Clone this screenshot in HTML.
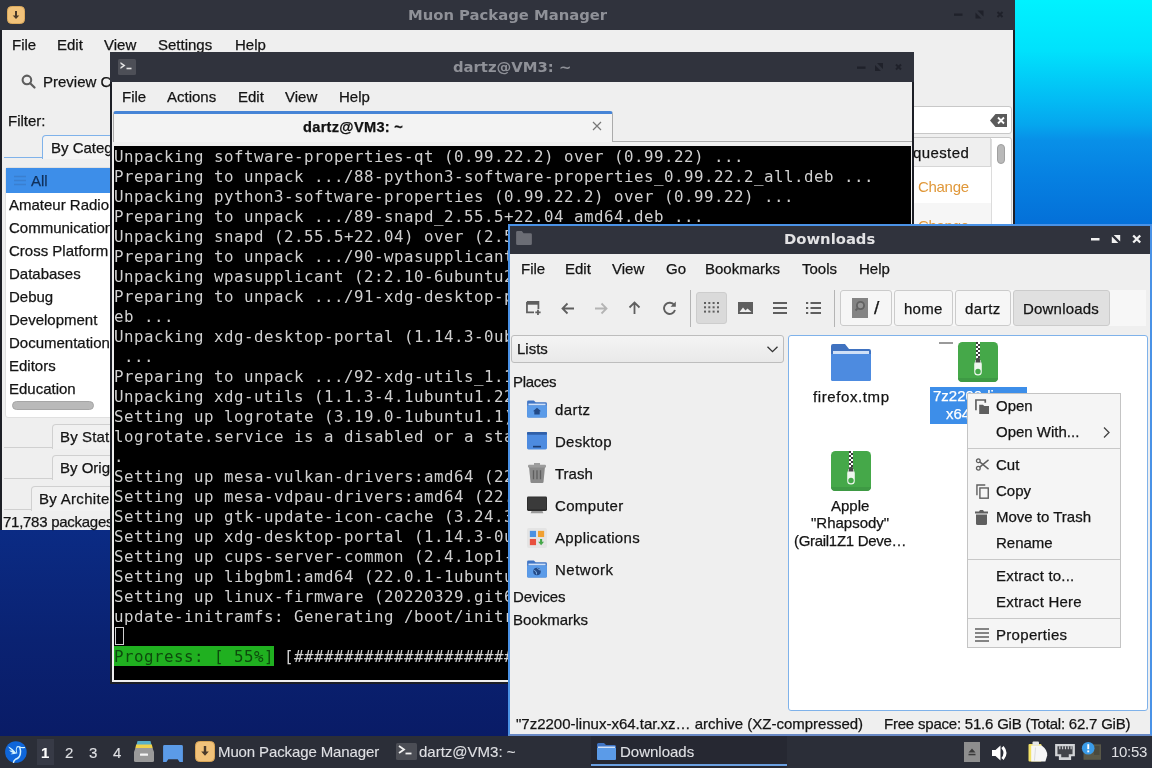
<!DOCTYPE html>
<html lang="en">
<head>
<meta charset="utf-8">
<title>Desktop</title>
<style>
*{box-sizing:border-box;margin:0;padding:0}
html,body{width:1152px;height:768px;overflow:hidden}
body{position:relative;font-family:"Liberation Sans",sans-serif;font-size:15px;color:#141414;
 background:linear-gradient(180deg,#00f2ff 0px,#00e2fc 50px,#03bbf4 100px,#05a6ee 125px,#0890e8 140px,#0681e2 175px,#0470d8 224px,#0b55c0 300px,#0a3ea0 400px,#0b2c86 520px,#0a2272 640px,#091b66 740px)}
.abs{position:absolute}
.t{position:absolute;white-space:pre;line-height:20px;height:20px;-webkit-text-stroke:0.250px}
.win{position:absolute;background:#efefef}
.tb{position:absolute;left:0;top:0;right:0;background:#30333d}
.ttl{position:absolute;white-space:pre;font-family:"DejaVu Sans","Liberation Sans",sans-serif;font-weight:bold;font-size:14.8px;line-height:20px;color:#8f9198}
svg{position:absolute;overflow:visible}
.pb{height:36px;background:#f6f6f6;border:1px solid #cbcbcb;border-radius:3px}
#panel .t{-webkit-text-stroke:0.100px}
/* terminal */
#term{font-family:"DejaVu Sans Mono","Liberation Mono",monospace;font-size:15.8px;letter-spacing:0.488px;color:#d0d0d0}
#term .l{position:absolute;left:0px;margin-top:1px;white-space:pre;line-height:20px;height:20px}
</style>
</head>
<body>
<div id="root" style="position:absolute;left:0;top:0;width:1152px;height:768px;will-change:transform">

<!-- ================= MUON ================= -->
<div class="win" id="muon" style="left:0;top:0;width:1014.500px;height:530px;border-left:2px solid #1d1f26;border-right:2px solid #1d1f26">
 <div class="tb" style="height:30px;left:-2px;right:-2px"></div>
 <!-- app icon -->
 <svg style="left:5px;top:5.500px" width="18" height="18" viewBox="0 0 18 18"><rect x="0.500" y="0.500" width="17" height="17" rx="4" fill="#f1c27a" stroke="#dcaa5c"/><path d="M8 5h2v4.500h2.300L9 13 5.700 9.500H8z" fill="#4a3a2a"/></svg>
 <span class="ttl" style="left:406px;top:5px">Muon Package Manager</span>
 <!-- window buttons (inactive) -->
 <svg style="left:950px;top:7px" width="60" height="14" viewBox="0 0 60 14"><rect x="2" y="6.500" width="8.500" height="2.300" fill="#1f212a"/><path d="M45.500 5l5 5M50.500 5l-5 5" stroke="#1f212a" stroke-width="2" fill="none"/><path d="M31.500 3.500v6l-6-6zM23.500 11.500v-6l6 6z" fill="#1f212a"/></svg>
 <!-- menu -->
 <span class="t" style="left:10px;top:35px">File</span>
 <span class="t" style="left:55px;top:35px">Edit</span>
 <span class="t" style="left:102px;top:35px">View</span>
 <span class="t" style="left:156px;top:35px">Settings</span>
 <span class="t" style="left:233px;top:35px">Help</span>
 <!-- toolbar -->
 <svg style="left:19px;top:74px" width="15" height="15" viewBox="0 0 16 16"><circle cx="6.300" cy="6.300" r="4.600" fill="none" stroke="#5e5e5e" stroke-width="2.200"/><path d="M9.800 9.800l4.600 4.600" stroke="#5e5e5e" stroke-width="2.400" stroke-linecap="round"/></svg>
 <span class="t" style="left:41px;top:72px">Preview Changes</span>
 <span class="t" style="left:6px;top:111px">Filter:</span>
 <!-- tab by category -->
 <div class="abs" style="left:2px;top:157px;width:420px;height:1px;background:#7fb2ea"></div>
 <div class="abs" style="left:40px;top:135px;width:140px;height:24px;border:1px solid #7fb2ea;border-bottom:none;border-radius:4px 4px 0 0;background:#f4f4f4"></div>
 <span class="t" style="left:49px;top:138px">By Category</span>
 <!-- list -->
 <div class="abs" style="left:3px;top:167px;width:420px;height:251px;background:#fff;border:1px solid #e0e0e0;border-radius:3px"></div>
 <div class="abs" style="left:4px;top:168px;width:418px;height:25px;background:#3d8ee9"></div>
 <svg style="left:12px;top:175px" width="12" height="11" viewBox="0 0 12 11"><path d="M0 1.5h12M0 5.5h12M0 9.5h12" stroke="#3a7fd0" stroke-width="1.6"/></svg>
 <span class="t" style="left:29px;top:171px;color:#10305a">All</span>
 <span class="t" style="left:7px;top:195px">Amateur Radio</span>
 <span class="t" style="left:7px;top:218px">Communication</span>
 <span class="t" style="left:7px;top:241px">Cross Platform</span>
 <span class="t" style="left:7px;top:264px">Databases</span>
 <span class="t" style="left:7px;top:287px">Debug</span>
 <span class="t" style="left:7px;top:310px">Development</span>
 <span class="t" style="left:7px;top:333px">Documentation</span>
 <span class="t" style="left:7px;top:356px">Editors</span>
 <span class="t" style="left:7px;top:379px">Education</span>
 <div class="abs" style="left:10px;top:401px;width:82px;height:9px;border-radius:5px;background:#b9b9b9;border:1px solid #a6a6a6"></div>
 <!-- lower tabs -->
 <div class="abs" style="left:2px;top:447px;width:50px;height:1px;background:#d0d0d0"></div>
 <div class="abs" style="left:50px;top:424px;width:140px;height:25px;border:1px solid #d0d0d0;border-bottom:none;border-radius:4px 4px 0 0;background:#f1f1f1"></div>
 <span class="t" style="left:58px;top:427px;letter-spacing:0.150px">By Status</span>
 <div class="abs" style="left:2px;top:478px;width:50px;height:1px;background:#d0d0d0"></div>
 <div class="abs" style="left:50px;top:455px;width:140px;height:25px;border:1px solid #d0d0d0;border-bottom:none;border-radius:4px 4px 0 0;background:#f1f1f1"></div>
 <span class="t" style="left:58px;top:458px">By Origin</span>
 <div class="abs" style="left:2px;top:509px;width:30px;height:1px;background:#d0d0d0"></div>
 <div class="abs" style="left:29px;top:486px;width:160px;height:25px;border:1px solid #d0d0d0;border-bottom:none;border-radius:4px 4px 0 0;background:#f1f1f1"></div>
 <span class="t" style="left:37px;top:489px;letter-spacing:0.300px">By Architecture</span>
 <span class="t" style="left:1px;top:512px;letter-spacing:-0.270px">71,783 packages available</span>
 <!-- right: search + table -->
 <div class="abs" style="left:430px;top:106px;width:580px;height:28px;background:#fff;border:1px solid #c8c8c8;border-radius:3px"></div>
 <svg style="left:988px;top:114px" width="17" height="13" viewBox="0 0 17 13"><path d="M0 6.5L5.5 0H17v13H5.500z" fill="#5b5b5b"/><path d="M8 3.5l6 6M14 3.500l-6 6" stroke="#fff" stroke-width="1.8"/></svg>
 <div class="abs" style="left:430px;top:137px;width:580px;height:381px;background:#fff;border:1px solid #c8c8c8;border-radius:3px"></div>
 <div class="abs" style="left:431px;top:138px;width:558px;height:29px;background:#efefef;border-bottom:1px solid #d6d6d6;border-right:1px solid #d6d6d6"></div>
 <div class="abs" style="left:431px;top:203px;width:558px;height:36px;background:#f6f6f6"></div>
 <div class="abs" style="left:989px;top:139px;width:1px;height:378px;background:#dcdcdc"></div>
 <div class="abs" style="left:995px;top:144px;width:8px;height:20px;border-radius:4px;background:#b9b9b9;border:1px solid #a0a0a0"></div>
 <span class="t" style="left:891px;top:143px;letter-spacing:0.400px">Requested</span>
 <span class="t" style="left:916px;top:177px;-webkit-text-stroke:0;color:#e0983a;letter-spacing:-0.300px">Change</span>
 <span class="t" style="left:916px;top:216px;-webkit-text-stroke:0;color:#e0983a;letter-spacing:-0.300px">Change</span>
</div>

<!-- ================= TERMINAL ================= -->
<div class="win" id="qterm" style="left:110px;top:52px;width:804px;height:632px;border:2px solid #1d1f26;border-top:none">
 <div class="tb" style="height:30px;left:-2px;right:-2px"></div>
 <div class="abs" style="left:-1px;top:0;width:0;height:0">
 <svg style="left:7px;top:7px" width="18" height="16" viewBox="0 0 18 16"><rect width="18" height="16" rx="1.500" fill="#4d4f57"/><path d="M2.500 3l5 3.500-5 3.500v-2l2.500-1.500L2.500 5z" fill="#e4e4e4"/><path d="M8.500 9.500h5" stroke="#e4e4e4" stroke-width="1.600"/></svg>
 <span class="ttl" style="left:342px;top:5px">dartz@VM3: ~</span>
 <svg style="left:741px;top:8px" width="60" height="14" viewBox="0 0 60 14"><rect x="5" y="6.500" width="8.500" height="2.300" fill="#1f212a"/><path d="M44 4.500l5 5M49 4.500l-5 5" stroke="#1f212a" stroke-width="2" fill="none"/><path d="M31 3v6l-6-6zM23 11v-6l6 6z" fill="#1f212a"/></svg>
 <span class="t" style="left:11px;top:35px">File</span>
 <span class="t" style="left:56px;top:35px">Actions</span>
 <span class="t" style="left:127px;top:35px">Edit</span>
 <span class="t" style="left:174px;top:35px">View</span>
 <span class="t" style="left:228px;top:35px">Help</span>
 <!-- tab bar -->
 <div class="abs" style="left:1px;top:59px;width:800px;height:30px;background:#efefef"></div>
 <div class="abs" style="left:2px;top:59px;width:500px;height:31px;background:#f3f3f3;border:1px solid #ababab;border-top:3px solid #4684d6;border-bottom:none;border-radius:3px 3px 0 0"></div>
 <div class="abs" style="left:502px;top:89px;width:299px;height:1px;background:#ababab"></div>
 <span class="t" style="left:192px;top:65px;font-weight:bold;font-size:14.600px;letter-spacing:0.300px;color:#111">dartz@VM3: ~</span>
 <svg style="left:481px;top:69px" width="10" height="10" viewBox="0 0 10 10"><path d="M1 1l8 8M9 1l-8 8" stroke="#777" stroke-width="1.200"/></svg>
 <!-- terminal area -->
 <div class="abs" id="term" style="left:1px;top:91px;width:800px;height:539px;background:#efefef">
 <div class="abs" style="left:2px;top:3px;width:797px;height:534px;background:#000;overflow:hidden">
 <div class="l" style="top:0px">Unpacking software-properties-qt (0.99.22.2) over (0.99.22) ...</div>
 <div class="l" style="top:20px">Preparing to unpack .../88-python3-software-properties_0.99.22.2_all.deb ...</div>
 <div class="l" style="top:40px">Unpacking python3-software-properties (0.99.22.2) over (0.99.22) ...</div>
 <div class="l" style="top:60px">Preparing to unpack .../89-snapd_2.55.5+22.04_amd64.deb ...</div>
 <div class="l" style="top:80px">Unpacking snapd (2.55.5+22.04) over (2.54.3+21.10.1ubuntu0.2) ...</div>
 <div class="l" style="top:100px">Preparing to unpack .../90-wpasupplicant_2%3a2.10-6ubuntu2_amd64.deb ...</div>
 <div class="l" style="top:120px">Unpacking wpasupplicant (2:2.10-6ubuntu2) over (2:2.9.0-21build1) ...</div>
 <div class="l" style="top:140px">Preparing to unpack .../91-xdg-desktop-portal_1.14.3-0ubuntu2.22.04.1_amd64.d</div>
 <div class="l" style="top:160px">eb ...</div>
 <div class="l" style="top:180px">Unpacking xdg-desktop-portal (1.14.3-0ubuntu2.22.04.1) over (1.8.1-1ubuntu1)</div>
 <div class="l" style="top:200px"> ...</div>
 <div class="l" style="top:220px">Preparing to unpack .../92-xdg-utils_1.1.3-4.1ubuntu1.22.04.1_all.deb ...</div>
 <div class="l" style="top:240px">Unpacking xdg-utils (1.1.3-4.1ubuntu1.22.04.1) over (1.1.3-4.1ubuntu1) ...</div>
 <div class="l" style="top:260px">Setting up logrotate (3.19.0-1ubuntu1.1) ...</div>
 <div class="l" style="top:280px">logrotate.service is a disabled or a static unit not running, not starting it</div>
 <div class="l" style="top:300px">.</div>
 <div class="l" style="top:320px">Setting up mesa-vulkan-drivers:amd64 (22.0.1-1ubuntu2) ...</div>
 <div class="l" style="top:340px">Setting up mesa-vdpau-drivers:amd64 (22.0.1-1ubuntu2) ...</div>
 <div class="l" style="top:360px">Setting up gtk-update-icon-cache (3.24.33-1ubuntu1) ...</div>
 <div class="l" style="top:380px">Setting up xdg-desktop-portal (1.14.3-0ubuntu2.22.04.1) ...</div>
 <div class="l" style="top:400px">Setting up cups-server-common (2.4.1op1-1ubuntu4.1) ...</div>
 <div class="l" style="top:420px">Setting up libgbm1:amd64 (22.0.1-1ubuntu2) ...</div>
 <div class="l" style="top:440px">Setting up linux-firmware (20220329.git681281e4-0ubuntu1) ...</div>
 <div class="l" style="top:460px">update-initramfs: Generating /boot/initrd.img-5.13.0-40-generic</div>
 <div class="abs" style="left:1px;top:481px;width:9px;height:18px;border:1px solid #d0d0d0"></div>
 <div class="l" style="top:500px;left:0"><span style="display:inline-block;height:20px;margin-top:-1px;vertical-align:top;background:#20b020;color:#0d4a0d;padding-top:1px">Progress: [ 55%]</span> [################################################.......................................] </div>
 </div>
 </div>
 </div>
</div>

<!-- ================= DOWNLOADS ================= -->
<div class="win" id="fm" style="left:508px;top:224px;width:644px;height:512px;border:2px solid #4a92e6;border-bottom-color:#6888c4">
 <div class="tb" style="height:28px"></div>
 <svg style="left:6px;top:5px" width="16" height="14" viewBox="0 0 18 16"><path d="M0 1.500Q0 0 1.500 0h5l2 2.500h8q1.500 0 1.500 1.500v10.500q0 1.500-1.500 1.500h-15Q0 16 0 14.500z" fill="#6b6d75"/></svg>
 <span class="ttl" style="left:274px;top:3px;color:#e2e2e4;font-size:14.800px">Downloads</span>
 <svg style="left:579px;top:6px" width="60" height="14" viewBox="0 0 60 14"><rect x="2" y="6" width="8.500" height="2.500" fill="#f2f2f2"/><path d="M44.200 3.500l7 7M51.200 3.500l-7 7" stroke="#f2f2f2" stroke-width="2.300" fill="none"/><path d="M31.200 3v6.500l-6.500-6.500zM22.800 11v-6.500l6.500 6.500z" fill="#f2f2f2"/></svg>
 <!-- menubar -->
 <span class="t" style="left:11px;top:33px">File</span>
 <span class="t" style="left:55px;top:33px">Edit</span>
 <span class="t" style="left:102px;top:33px">View</span>
 <span class="t" style="left:156px;top:33px">Go</span>
 <span class="t" style="left:195px;top:33px">Bookmarks</span>
 <span class="t" style="left:292px;top:33px">Tools</span>
 <span class="t" style="left:349px;top:33px">Help</span>
 <!-- toolbar -->
 <svg style="left:16px;top:75px" width="16" height="15" viewBox="0 0 18 17"><path d="M1 1h13v8M1 1v12h8" fill="none" stroke="#5f5f5f" stroke-width="2"/><path d="M1 2.200h13" stroke="#5f5f5f" stroke-width="4"/><path d="M13.500 10v6M10.500 13h6" stroke="#5f5f5f" stroke-width="2"/></svg>
 <svg style="left:51px;top:76px" width="14" height="13" viewBox="0 0 14 13"><path d="M13 6.500H2M6.500 1.500l-5 5 5 5" fill="none" stroke="#5f5f5f" stroke-width="1.800"/></svg>
 <svg style="left:84px;top:76px" width="14" height="13" viewBox="0 0 14 13"><path d="M1 6.500h11M7.500 1.500l5 5-5 5" fill="none" stroke="#b4b4b4" stroke-width="1.800"/></svg>
 <svg style="left:118px;top:75px" width="13" height="14" viewBox="0 0 13 14"><path d="M6.500 13V2M1.500 6.500l5-5 5 5" fill="none" stroke="#5f5f5f" stroke-width="1.800"/></svg>
 <svg style="left:152px;top:75px" width="15" height="15" viewBox="0 0 15 15"><path d="M12.300 4.200A5.600 5.600 0 1 0 13 9" fill="none" stroke="#5f5f5f" stroke-width="1.900"/><path d="M8.500 5.800h5.300V0.500z" fill="#5f5f5f"/></svg>
 <div class="abs" style="left:180px;top:64px;width:1px;height:37px;background:#b4b4b4"></div>
 <div class="abs" style="left:186px;top:66px;width:31px;height:32px;background:#dadada;border:1px solid #cdcdcd;border-radius:3px"></div>
 <svg style="left:194px;top:75px" width="15" height="15" viewBox="0 0 15 15"><g fill="#5f5f5f"><rect x="0" y="1" width="2" height="2"/><rect x="4.300" y="1" width="2" height="2"/><rect x="8.600" y="1" width="2" height="2"/><rect x="13" y="1" width="2" height="2"/><rect x="0" y="5.300" width="2" height="2"/><rect x="4.300" y="5.300" width="2" height="2"/><rect x="8.600" y="5.300" width="2" height="2"/><rect x="13" y="5.300" width="2" height="2"/><rect x="0" y="9.600" width="2" height="2"/><rect x="4.300" y="9.600" width="2" height="2"/><rect x="8.600" y="9.600" width="2" height="2"/><rect x="13" y="9.600" width="2" height="2"/></g></svg>
 <svg style="left:228px;top:76px" width="15" height="12" viewBox="0 0 15 12"><path d="M0 0h15v12H0z M1.500 10l3.500-4.500 2.500 3 2-2 4 3.500z" fill="#5f5f5f" fill-rule="evenodd"/></svg>
 <svg style="left:263px;top:76px" width="14" height="12" viewBox="0 0 14 12"><path d="M0 1h14M0 6h14M0 11h14" stroke="#5f5f5f" stroke-width="1.800"/></svg>
 <svg style="left:296px;top:76px" width="15" height="12" viewBox="0 0 15 12"><path d="M4.500 1h10.500M4.500 6h10.500M4.500 11h10.500" stroke="#5f5f5f" stroke-width="1.800"/><path d="M0 1h2.200M0 6h2.200M0 11h2.200" stroke="#5f5f5f" stroke-width="2"/></svg>
 <div class="abs" style="left:324px;top:64px;width:1px;height:37px;background:#b4b4b4"></div>
 <!-- path bar -->
 <div class="abs" style="left:330px;top:64px;width:306px;height:36px;background:#f7f7f7"></div>
 <div class="abs pb" style="left:330px;top:64px;width:52px"></div>
 <svg style="left:342px;top:72px" width="16" height="20" viewBox="0 0 16 20"><rect width="16" height="20" fill="#848484"/><circle cx="8.500" cy="7.500" r="3.600" fill="#969696" stroke="#626262" stroke-width="1.800"/><path d="M5.500 10.500l-2 2" stroke="#626262" stroke-width="1.800"/></svg>
 <span class="t" style="left:364px;top:72px;font-size:19px">/</span>
 <div class="abs pb" style="left:384px;top:64px;width:59px"></div>
 <span class="t" style="left:394px;top:73px;letter-spacing:0.250px">home</span>
 <div class="abs pb" style="left:445px;top:64px;width:56px"></div>
 <span class="t" style="left:455px;top:73px;letter-spacing:0.500px">dartz</span>
 <div class="abs pb" style="left:503px;top:64px;width:97px;background:#e0e0e0"></div>
 <span class="t" style="left:513px;top:73px;letter-spacing:0.200px">Downloads</span>
 <!-- side panel -->
 <div class="abs" style="left:1px;top:109px;width:273px;height:28px;background:linear-gradient(#f4f4f4,#e9e9e9);border:1px solid #bdbdbd;border-radius:3px"></div>
 <span class="t" style="left:7px;top:113px">Lists</span>
 <svg style="left:257px;top:120px" width="11" height="7" viewBox="0 0 11 7"><path d="M0.500 0.700l5 5 5-5" fill="none" stroke="#333" stroke-width="1.300"/></svg>
 <span class="t" style="left:3px;top:146px;letter-spacing:-0.300px">Places</span>
 <span class="t" style="left:45px;top:174px;letter-spacing:0.400px">dartz</span>
 <span class="t" style="left:45px;top:206px;letter-spacing:0.250px">Desktop</span>
 <span class="t" style="left:45px;top:238px">Trash</span>
 <span class="t" style="left:45px;top:270px;letter-spacing:0.350px">Computer</span>
 <span class="t" style="left:45px;top:302px;letter-spacing:0.350px">Applications</span>
 <span class="t" style="left:45px;top:334px;letter-spacing:0.500px">Network</span>
 <span class="t" style="left:3px;top:361px;letter-spacing:-0.150px">Devices</span>
 <span class="t" style="left:3px;top:384px">Bookmarks</span>
 <!-- place icons -->
 <svg style="left:17px;top:174px" width="20" height="18" viewBox="0 0 22 20"><path d="M0 2q0-1.500 1.500-1.500h6l2 2h11q1.500 0 1.500 1.500v14q0 1.500-1.500 1.500h-19Q0 19.500 0 18z" fill="#3f74c4"/><rect x="1.500" y="4" width="19" height="2" fill="#cfe0f7"/><path d="M0 6h22v12q0 1.500-1.500 1.500h-19Q0 19.500 0 18z" fill="#5b9be8"/><path d="M11 8.500l-4.500 4h1.500V16h6v-3.500h1.500z" fill="#234a86"/></svg>
 <svg style="left:17px;top:206px" width="20" height="17.500" viewBox="0 0 20 19" preserveAspectRatio="none"><rect x="0" y="0" width="20" height="19" rx="1.500" fill="#4d8be0"/><rect x="0" y="0" width="20" height="3" rx="1" fill="#2f5fa8"/><rect x="6" y="15" width="8" height="1.800" fill="#1d3d73"/></svg>
 <svg style="left:18px;top:237px" width="18" height="20" viewBox="0 0 18 22" preserveAspectRatio="none"><path d="M1 4h16l-1.500 17q-0.100 1-1 1h-11q-0.900 0-1-1z" fill="#8a8a8a"/><rect x="0" y="2" width="18" height="3" rx="1" fill="#9d9d9d"/><rect x="6" y="0" width="6" height="2.500" fill="#9d9d9d"/><path d="M5.500 8v10M9 8v10M12.500 8v10" stroke="#5e5e5e" stroke-width="1.300"/></svg>
 <svg style="left:17px;top:270px" width="20" height="19" viewBox="0 0 22 20"><rect x="0" y="0" width="22" height="16" rx="1.500" fill="#2e2e2e"/><rect x="1" y="1" width="20" height="13" fill="#3a3a3a"/><path d="M5 16h12l1 2.500h-14z" fill="#9a9a9a"/></svg>
 <svg style="left:17px;top:302px" width="20" height="20" viewBox="0 0 21 21"><rect width="21" height="21" rx="2" fill="#e4e4e4"/><rect x="3" y="3" width="6.500" height="6.500" fill="#4a90e2"/><rect x="11.500" y="3" width="6.500" height="6.500" fill="#f0a030"/><rect x="3" y="11.500" width="6.500" height="6.500" fill="#e8503e"/><path d="M13.700 11.500h2.200v3h2l-3.100 3.500L11.700 14.500h2z" fill="#45a849"/></svg>
 <svg style="left:17px;top:334px" width="20" height="18" viewBox="0 0 22 20"><path d="M0 2q0-1.500 1.500-1.500h6l2 2h11q1.500 0 1.500 1.500v14q0 1.500-1.500 1.500h-19Q0 19.500 0 18z" fill="#3f74c4"/><rect x="1.500" y="4" width="19" height="2" fill="#cfe0f7"/><path d="M0 6h22v12q0 1.500-1.500 1.500h-19Q0 19.500 0 18z" fill="#5b9be8"/><circle cx="11" cy="12.800" r="4.200" fill="#234a86"/><path d="M8 11.500q3 1 2.500 4.500M11.500 9q1.500 2.500 3.500 2" stroke="#8fbdf2" fill="none"/></svg>
 <!-- file view -->
 <div class="abs" style="left:278px;top:109px;width:360px;height:376px;background:#fff;border:1px solid #7fb2ea;border-radius:3px"></div>
 <svg style="left:321px;top:117px" width="40" height="40" viewBox="0 0 40 40"><path d="M0 3q0-2 2-2h12l4 5h20q2 0 2 2v28q0 2-2 2H2q-2 0-2-2z" fill="#3f72c0"/><rect x="2" y="8" width="36" height="3" fill="#cfe0f7"/><path d="M0 11h40v25q0 2-2 2H2q-2 0-2-2z" fill="#4d8be0"/></svg>
 <span class="t" style="left:303px;top:161px;letter-spacing:0.600px">firefox.tmp</span>
 <div class="abs" style="left:429px;top:116px;width:14px;height:2px;background:#9a9a9a"></div>
 <svg class="zip" style="left:448px;top:116px" width="40" height="40" viewBox="0 0 40 40"><rect width="40" height="40" rx="4.500" fill="#45a849"/><path d="M0 36h40v0q0 4-4.500 4h-31Q0 40 0 36z" fill="#3e9a44"/><path d="M18 0h4v17h-4z" fill="#fff"/><path d="M18 0h2v2h-2zM20 2h2v2h-2zM18 4h2v2h-2zM20 6h2v2h-2zM18 8h2v2h-2zM20 10h2v2h-2zM18 12h2v2h-2zM20 14h2v2h-2z" fill="#3a3a3a"/><path d="M17.500 18h5l1.300 4v8q0 3.500-3.800 3.500T16.200 30v-8z" fill="#eef7ee"/><path d="M18.300 16h3.400l0.800 4.500h-5z" fill="#4a4a4a"/><circle cx="20" cy="29.500" r="2.700" fill="#45a849"/></svg>
 <div class="abs" style="left:420px;top:161px;width:97px;height:37px;background:#3d8ee9"></div>
 <span class="t" style="left:423px;top:160px;color:#fff">7z2200-linux-</span>
 <span class="t" style="left:436px;top:178px;color:#fff">x64.tar.xz</span>
 <svg class="zip" style="left:321px;top:225px" width="40" height="40" viewBox="0 0 40 40"><rect width="40" height="40" rx="4.500" fill="#45a849"/><path d="M0 36h40v0q0 4-4.500 4h-31Q0 40 0 36z" fill="#3e9a44"/><path d="M18 0h4v17h-4z" fill="#fff"/><path d="M18 0h2v2h-2zM20 2h2v2h-2zM18 4h2v2h-2zM20 6h2v2h-2zM18 8h2v2h-2zM20 10h2v2h-2zM18 12h2v2h-2zM20 14h2v2h-2z" fill="#3a3a3a"/><path d="M17.500 18h5l1.300 4v8q0 3.500-3.800 3.500T16.200 30v-8z" fill="#eef7ee"/><path d="M18.300 16h3.400l0.800 4.500h-5z" fill="#4a4a4a"/><circle cx="20" cy="29.500" r="2.700" fill="#45a849"/></svg>
 <span class="t" style="left:321px;top:270px">Apple</span>
 <span class="t" style="left:301px;top:287px">"Rhapsody"</span>
 <span class="t" style="left:284px;top:305px;letter-spacing:-0.300px">(Grail1Z1 Deve…</span>
 <!-- status bar -->
 <span class="t" style="left:6px;top:488px">"7z2200-linux-x64.tar.xz… archive (XZ-compressed)</span>
 <span class="t" style="left:374px;top:488px;letter-spacing:-0.210px">Free space: 51.6 GiB (Total: 62.7 GiB)</span>
</div>

<!-- ================= CONTEXT MENU ================= -->
<div class="abs" id="ctx" style="left:967px;top:393px;width:154px;height:255px;background:#f5f5f5;border:1px solid #c4c4c4">
 <svg style="left:7px;top:5px" width="14" height="15" viewBox="0 0 15 16"><path d="M1 12V1h10v3" fill="none" stroke="#5f5f5f" stroke-width="1.800"/><path d="M4.500 6h4l1.500 1.500h5V16h-10.500z" fill="#5f5f5f"/></svg>
 <span class="t" style="left:28px;top:2px">Open</span>
 <span class="t" style="left:28px;top:28px">Open With...</span>
 <svg style="left:135px;top:33px" width="7" height="11" viewBox="0 0 7 11"><path d="M1 0.500l5 5-5 5" fill="none" stroke="#444" stroke-width="1.300"/></svg>
 <div class="abs" style="left:0;top:54px;width:152px;height:1px;background:#c8c8c8"></div>
 <svg style="left:8px;top:64px" width="13" height="13" viewBox="0 0 14 14"><circle cx="2.500" cy="3" r="2" fill="none" stroke="#5f5f5f" stroke-width="1.400"/><circle cx="2.500" cy="11" r="2" fill="none" stroke="#5f5f5f" stroke-width="1.400"/><path d="M4 4.200L13.500 12M4 9.800L13.500 2" stroke="#5f5f5f" stroke-width="1.500"/></svg>
 <span class="t" style="left:28px;top:61px">Cut</span>
 <svg style="left:8px;top:90px" width="13" height="15" viewBox="0 0 14 16"><path d="M1 12V1h9" fill="none" stroke="#5f5f5f" stroke-width="1.500"/><rect x="4.200" y="4.200" width="9" height="11" fill="none" stroke="#5f5f5f" stroke-width="1.500"/></svg>
 <span class="t" style="left:28px;top:87px">Copy</span>
 <svg style="left:7px;top:116px" width="13" height="15" viewBox="0 0 13 15"><path d="M0 1.500h4l1-1.500h3l1 1.500h4v2H0z" fill="#5f5f5f"/><path d="M1 4.500h11v9q0 1.500-1.500 1.500h-8Q1 15 1 13.500z" fill="#5f5f5f"/></svg>
 <span class="t" style="left:28px;top:113px">Move to Trash</span>
 <span class="t" style="left:28px;top:139px">Rename</span>
 <div class="abs" style="left:0;top:165px;width:152px;height:1px;background:#c8c8c8"></div>
 <span class="t" style="left:28px;top:172px;letter-spacing:0.200px">Extract to...</span>
 <span class="t" style="left:28px;top:198px;letter-spacing:0.200px">Extract Here</span>
 <div class="abs" style="left:0;top:224px;width:152px;height:1px;background:#c8c8c8"></div>
 <svg style="left:7px;top:234px" width="14" height="14" viewBox="0 0 14 14"><path d="M0 1h14M0 5h14M0 9h14M0 13h14" stroke="#5f5f5f" stroke-width="1.700"/></svg>
 <span class="t" style="left:28px;top:231px;letter-spacing:0.300px">Properties</span>
</div>

<!-- ================= PANEL ================= -->
<div class="abs" id="panel" style="left:0;top:736px;width:1152px;height:33px;background:#2b2e38;color:#dfe0e4">
 <!-- menu icon -->
 <svg style="left:5px;top:4.500px" width="22" height="22" viewBox="0 0 22 22"><circle cx="10.900" cy="11" r="10.800" fill="#0f66da"/><path d="M3.100 5.500Q7.500 7 11.600 12.600Q8.500 13.600 5.500 13.300Q6.800 12.300 8 12Q5.200 10.800 4 9.200Q5.800 9.700 7.300 9.500Q4.500 8 3.100 5.500z" fill="#d4f3ff"/><path d="M20 6.500Q16.500 6.900 14.600 6Q12.600 5 11.600 6.600" fill="none" stroke="#d4f3ff" stroke-width="1.100"/><path d="M11.600 6.600Q10.800 8.500 11.800 12.500" fill="none" stroke="#bfe9ff" stroke-width="1"/><path d="M14.800 6.200Q16 10 15.300 13Q14.500 17 10.500 18.300Q8.800 19.300 8.500 21.300" fill="none" stroke="#d4f3ff" stroke-width="1.500" stroke-linecap="round"/></svg>
 <!-- pager -->
 <div class="abs" style="left:37px;top:3px;width:17px;height:26px;background:#373a46"></div>
 <span class="t" style="left:41px;top:7px;font-weight:bold;color:#fff">1</span>
 <span class="t" style="left:65px;top:7px">2</span>
 <span class="t" style="left:89px;top:7px">3</span>
 <span class="t" style="left:113px;top:7px">4</span>
 <!-- quicklaunch -->
 <svg style="left:134px;top:5px" width="20" height="21" viewBox="0 0 20 21"><path d="M3.500 0h13l1 4h-15z" fill="#58b0c8"/><path d="M2.200 3.500h15.600l1 4H1.200z" fill="#f0d24a"/><path d="M1.500 7h17L20 11v8.500q0 1.500-1.500 1.500h-17Q0 21 0 19.500V11z" fill="#9a9a9a"/><rect x="6" y="12.500" width="8" height="2.300" rx="0.500" fill="#f4f4f4"/></svg>
 <svg style="left:163px;top:8.500px" width="20" height="17" viewBox="0 0 21 18"><path d="M0 1.500Q0 0 1.500 0h18Q21 0 21 1.500V18h-3.500l-2-3h-10l-2 3H0z" fill="#5b9be8"/></svg>
 <!-- tasks -->
 <svg style="left:195px;top:5px" width="20" height="21" viewBox="0 0 20 21"><rect x="0.500" y="0.500" width="19" height="20" rx="4" fill="#f1c27a" stroke="#d9a555"/><path d="M8.800 5h2.400v5.500h2.600L10 14.700 6.200 10.500h2.600z" fill="#4a3a2a"/></svg>
 <span class="t" style="left:218px;top:6px;letter-spacing:-0.120px">Muon Package Manager</span>
 <svg style="left:396px;top:7px" width="21" height="17" viewBox="0 0 21 17"><rect width="21" height="17" rx="1.500" fill="#4b4d55"/><path d="M3 3l5 3.500L3 10" fill="none" stroke="#f2f2f2" stroke-width="1.800"/><path d="M9.500 10.500h6" stroke="#f2f2f2" stroke-width="1.800"/></svg>
 <span class="t" style="left:419px;top:6px">dartz@VM3: ~</span>
 <div class="abs" style="left:591px;top:0;width:196px;height:32px;background:#262832"></div>
 <div class="abs" style="left:591px;top:28px;width:196px;height:2px;background:#6a9fe0"></div>
 <svg style="left:597px;top:7px" width="19" height="17" viewBox="0 0 19 17"><path d="M0 1.500Q0 0 1.500 0h5.500l2 2h8.500Q19 2 19 3.500v12q0 1.500-1.500 1.500h-16Q0 17 0 15.500z" fill="#3f74c4"/><rect x="1" y="3.500" width="17" height="2" fill="#cfe0f7"/><path d="M0 5h19v10.500q0 1.500-1.500 1.500h-16Q0 17 0 15.500z" fill="#5b9be8"/></svg>
 <span class="t" style="left:620px;top:6px">Downloads</span>
 <!-- tray -->
 <div class="abs" style="left:964px;top:6px;width:16px;height:20px;background:#8e8e8e"></div>
 <svg style="left:968px;top:12px" width="8" height="8" viewBox="0 0 8 8"><path d="M4 0.500L7.500 4.500h-7z" fill="#3a3a3a"/><rect x="0.500" y="5.800" width="7" height="1.500" fill="#3a3a3a"/></svg>
 <svg style="left:992px;top:9px" width="17" height="16" viewBox="0 0 17 16"><path d="M0 5h3.500L8.500 0.500v15L3.500 11H0z" fill="#fff"/><path d="M10.500 2q5 6 0 12" fill="none" stroke="#fff" stroke-width="3"/></svg>
 <svg style="left:1028px;top:5px" width="20" height="21" viewBox="0 0 20 21"><rect x="0.500" y="3" width="13" height="17.500" rx="1" fill="#f3e266"/><path d="M3.200 4.500h10.500q6 4.500 5.500 10l-1.800 6H3.200z" fill="#f6f6f6"/><rect x="4.500" y="0.500" width="6.500" height="4" rx="1" fill="#e6e6e6"/><path d="M7.500 6.500l-1 13" stroke="#dcdcdc" stroke-width="1"/></svg>
 <svg style="left:1055px;top:8px" width="20" height="16" viewBox="0 0 21 17"><path d="M0 0h21v13h-4v4H4v-4H0z" fill="#d2d4d7"/><path d="M2.500 2.500h16v8.500h-4v3h-8v-3h-4z" fill="#42444a"/><path d="M5 2.500v3M8 2.500v3M11 2.500v3M14 2.500v3M17 2.500v3" stroke="#d2d4d7" stroke-width="1.200"/></svg>
 <svg style="left:1081px;top:5px" width="22" height="20" viewBox="0 0 22 20"><rect x="2.500" y="3.300" width="17.500" height="15.500" fill="#595848"/><rect x="13" y="5" width="5.500" height="9" fill="#4a4a3e"/><circle cx="7.200" cy="7.200" r="6.300" fill="#3a9be8"/><rect x="6.300" y="3.200" width="1.900" height="5" fill="#fff"/><rect x="6.300" y="9.400" width="1.900" height="1.900" fill="#fff"/></svg>
 <span class="t" style="left:1111px;top:6px;letter-spacing:-0.300px;-webkit-text-stroke:0">10:53</span>
</div>

</div>
</body>
</html>
